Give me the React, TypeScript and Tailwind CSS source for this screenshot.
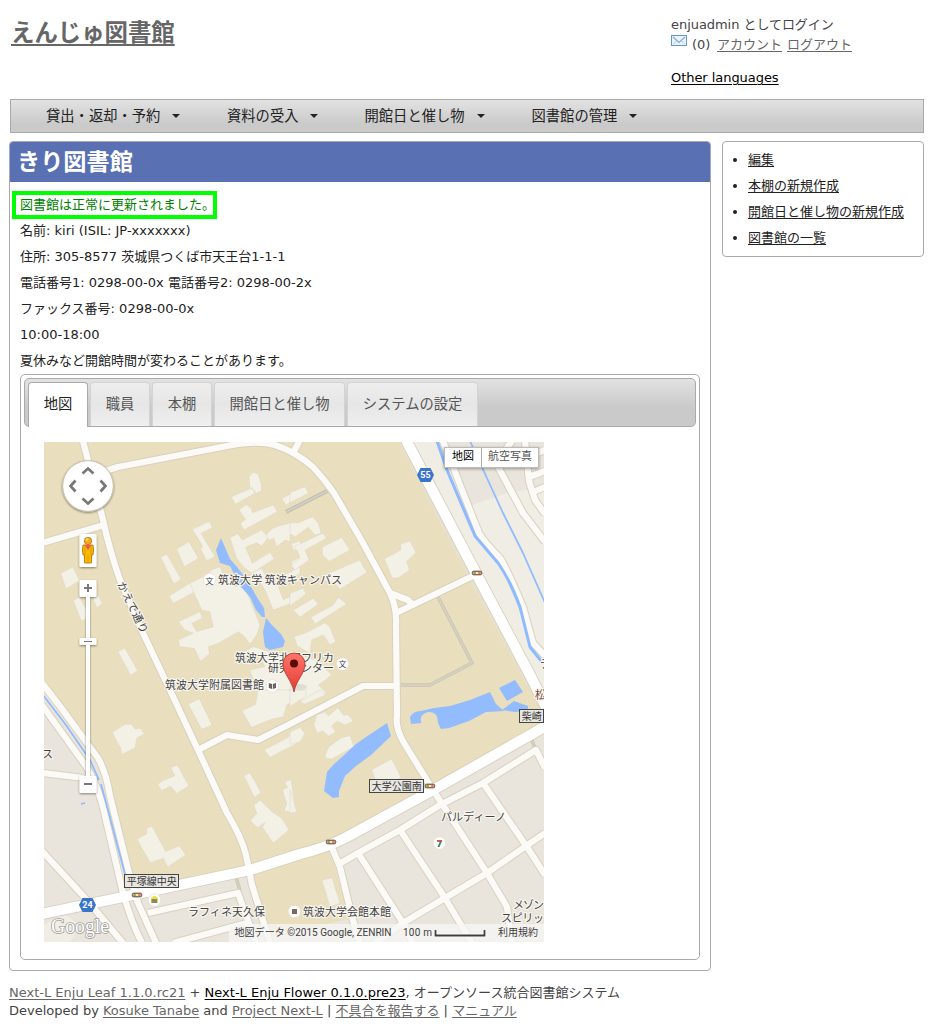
import React from "react";

const font = "font-['DejaVu_Sans','Noto_Sans_CJK_JP',sans-serif]";

const menus = [
  { label: "貸出・返却・予約", width: "w-[181px]" },
  { label: "資料の受入", width: "w-[137.5px]" },
  { label: "開館日と催し物", width: "w-[167px]" },
  { label: "図書館の管理", width: "w-[150px]" },
];

const tabs = [
  { label: "地図", width: "w-[60px]", active: true },
  { label: "職員", width: "w-[60px]" },
  { label: "本棚", width: "w-[60px]" },
  { label: "開館日と催し物", width: "w-[131px]" },
  { label: "システムの設定", width: "w-[131px]" },
];

const details = [
  "名前: kiri (ISIL: JP-xxxxxxx)",
  "住所: 305-8577 茨城県つくば市天王台1-1-1",
  "電話番号1: 0298-00-0x 電話番号2: 0298-00-2x",
  "ファックス番号: 0298-00-0x",
  "10:00-18:00",
  "夏休みなど開館時間が変わることがあります。",
];

const actions = ["編集", "本棚の新規作成", "開館日と催し物の新規作成", "図書館の一覧"];

const localRoads = [
  "M83 441L90 468L103 520Q110 552 120 580L143 633L170 690L198 750L227 813Q242 838 246 855L252 885L270 943",
  "M90 470L105 471L118 467L227 446Q257 440 275 445Q296 452 313 467Q325 480 334 493L363 543L390 593Q397 608 396 625L397 715Q395 728 404 743L433 790L487 873L507 907L512 943",
  "M293 453L300 440",
  "M42 543L104 525",
  "M390 593L408 600L412 604M477 574L396 613",
  "M398 686L363 686L290 724L258 740L227 735L198 750",
  "M42 683L62 709L98 758Q106 772 110 796L130 877L138 903L156 943",
  "M42 705L83 762Q98 782 106 820L123 893Q132 924 142 943",
  "M42 773L84 778",
  "M42 851L87 900L123 943",
  "M148 913L238 893L256 943M173 943L247 923",
  "M339 864L358 853L400 830L440 805L483 783L536 750L545 768",
  "M330 843L340 867L352 917L360 943",
  "M358 853L403 923L413 943",
  "M400 830L445 898L472 943",
  "M483 783L527 847L545 875",
  "M545 833L487 873L445 898L403 923L375 943",
  "M443 441L462 490L479 533Q484 542 500 558Q506 567 523 607L533 643L545 656",
  "M512 441L496 463L523 513L545 542",
  "M525 441L529 481L535 500L545 514M529 477L545 471M533 492L545 487M525 458L545 450",
];

const trunkRoads = [
  "M406 440L477 575L530 675L546 707",
  "M42 914L123 897L250 870L300 854Q325 848 345 838L433 790L546 726",
];

function MapArt() {
  return (
    <svg className="block h-[500px] w-[500px]" viewBox="44 442 500 500">
      <defs>
        <linearGradient id="pin" x1="0" y1="0" x2="0" y2="1">
          <stop offset="0" stopColor="#ff766a" />
          <stop offset="1" stopColor="#e33b34" />
        </linearGradient>
        <filter id="shade" x="-30%" y="-30%" width="160%" height="160%">
          <feDropShadow dx="0" dy="1" stdDeviation="1.2" floodColor="#000" floodOpacity=".45" />
        </filter>
      </defs>
      <rect x="44" y="442" width="500" height="500" fill="#e9e5dc" />
      <path d="M406 441H544V728L530 715Z" fill="#f0ede5" />
      <path d="M436 441H544V487L507 493L472 505Z" fill="#e9e5dc" />
      <path d="M44 442H407L477 575L544 706V727L433 790L330 842L250 870L130 894L108 790L98 762L44 690Z" fill="#e9debd" />
      <path d="M250 872L330 850L350 919L268 936Z" fill="#e9debd" />
      <path d="M44 925L64 914L80 925L70 942H44Z" fill="#f0ede5" />

      {/* campus buildings, north and west */}
      <g transform="translate(40 440) scale(.33333)" fill="#f3f0e5" stroke="#ddd8ca" strokeWidth="1.5">
        <path d="M627 110L640 97L655 103L663 130L665 152L648 160L637 145L574 169L635 142L645 160L586 193L574 170L630 145Z" />
        <path d="M597 210L620 193L635 207L637 218L700 195L712 215L612 270L601 250L617 238Z" />
        <path d="M725 176L780 147V172L738 195Z" />
        <path d="M457 268L508 244L517 263L483 280L525 350L500 362L482 328L488 318Z" />
        <path d="M410 327L447 305L475 355L433 380Z M362 352L380 342L423 417L402 432Z" />
        <path d="M387 468L450 430L465 455L400 490Z" />
        <path d="M62 400L98 381L119 422L78 446Z M100 482L118 470L150 530L124 543Z M157 472L175 468L187 490L171 504Z M234 635L254 624L293 692L272 706Z" />
        <path d="M450 430L480 415L500 405L515 390L540 380L550 405L575 400L585 440L610 430L660 555L650 585L630 613L615 590L595 575L535 610L505 620L508 642L482 664L463 625L420 620L415 600L460 580L435 570L415 545L480 515L487 535L455 550L470 575L520 560L510 515L485 510Z" />
        <path d="M570 293L593 281L607 300L665 270L685 292L665 318L650 308L617 322L637 370L690 337L703 357L635 400L610 380L590 355Z" />
        <path d="M697 265L720 257L765 245L780 260V275L750 282L750 305L735 300L710 320L702 295L688 300L678 286Z" />
        <path d="M640 395L665 385L690 430L780 380V400L745 420L715 440L730 480L780 455V480L700 510L675 450Z" />
        <path d="M753 312L780 302V330H760ZM753 366L780 352V380L762 385ZM763 512L780 500V530Z" />
        <path d="M603 640L640 620L735 650L780 750V780H660L630 690L675 680L660 650Z" />
      </g>
      {/* buildings east of the campus centre */}
      <g transform="translate(290 440) scale(.33333)" fill="#f3f0e5" stroke="#ddd8ca" strokeWidth="1.5">
        <path d="M0 158L45 140L55 160L0 188Z M0 250L25 248L68 230L85 250L93 280L75 285L55 262L15 290L0 280Z" />
        <path d="M12 320L98 280L110 295L45 330L57 360L15 390L3 375L30 355L23 335Z" />
        <path d="M97 322L155 292L180 330L118 364L98 345Z M283 357L332 330V312L360 303L378 337L350 365L358 390L325 414H307Z" />
        <path d="M105 405L210 360L217 375L231 397L150 448L135 430L100 420Z" />
        <path d="M0 460L40 445L48 462L0 498ZM10 510L70 475L85 492L30 532ZM62 532L130 495L145 472L170 492L75 552Z" />
        <path d="M12 590L45 580L105 548L120 562L137 605L120 615L100 585L65 600L60 640L22 618Z" />
        <path d="M0 650L20 640L85 665L125 705L85 735L108 758L60 780H0Z" />
      </g>
      {/* southern buildings */}
      <g transform="translate(40 690) scale(.33333)" fill="#f3f0e5" stroke="#ddd8ca" strokeWidth="1.5">
        <path d="M445 43L478 26L516 105L485 118Z M217 127L255 103L275 103L285 117L300 115L313 131L290 145L285 173L247 193L240 170L225 145Z" />
        <path d="M353 283L370 271L405 258L393 233L412 224L446 288L410 310L392 288L365 302Z" />
        <path d="M291 448L320 432L320 415L336 408L377 485L418 467L437 495L383 531L370 505L331 518Z" />
        <path d="M612 257L630 248L663 308L643 322Z M728 300L743 292L734 277L754 268L756 290L767 360L768 370L732 362L740 342Z" />
        <path d="M631 392L650 370L641 346L660 330L696 365L725 385L747 420L700 459L667 412L676 397L652 413Z" />
        <path d="M606 62L647 43L655 0H745L774 20L740 45L730 80L695 88L634 112Z M673 180L745 142L755 130L780 120V155L690 202Z" />
      </g>
      <g transform="translate(290 690) scale(.33333)" fill="#f3f0e5" stroke="#ddd8ca" strokeWidth="1.5">
        <path d="M0 0H48L50 15L0 50ZM30 35L90 0L107 15L45 42Z M72 105L80 75L106 66L115 78L143 53L160 75H175L190 94L165 105L143 93L125 107L137 125L117 139L98 122L82 130Z" />
        <path d="M105 195L117 170L155 143L180 137L192 170L125 207L108 205Z M0 126L30 112L45 130L30 155L0 164Z M245 239L305 207L334 265L260 280Z M96 571L126 563L150 640L120 650Z M0 300V370L20 365Z" />
      </g>

      <g fill="none" strokeLinejoin="round">
        <path d="M286 512L329 490" stroke="#bfbcb1" strokeWidth="4" />
        <path d="M286 512L329 490" stroke="#d2cec2" strokeWidth="2" />
        <path d="M438 597L472 663L430 685H400M530 736L535 748M236 877L240 891" stroke="#c8c3b1" strokeWidth="3.5" />
        <path d="M438 597L472 663L430 685H400M530 736L535 748M236 877L240 891" stroke="#d6d1bf" strokeWidth="2" />
        <path d="M403 442L470 573L533 688" stroke="#e7e0cd" strokeWidth="8" />
        {localRoads.map((d) => <path key={d} d={d} stroke="#d8d1bf" strokeWidth="8.2" />)}
        {trunkRoads.map((d) => <path key={d} d={d} stroke="#d5cebc" strokeWidth="12" />)}
        {localRoads.map((d) => <path key={d} d={d} stroke="#fbfaf7" strokeWidth="6.2" />)}
        {trunkRoads.map((d) => <path key={d} d={d} stroke="#fff" strokeWidth="10.3" />)}
        <path d="M437 441L447 470L475 536L498 563Q510 580 520 607L530 647L542 662" stroke="#8ebaff" strokeWidth="3" />
        <path d="M470 441L503 513L523 553L545 603M43 695L66 725L90 760L99 780M101 784L125 874M81 804L85 803" stroke="#8ebaff" strokeWidth="1.7" />
      </g>

      <g fill="#93bcff">
        <path d="M221 538L216 550L220 563L230 566L241 587L250 597L256 610L262 617L265 617L264 608L258 599L247 580L237 567L230 559Z" />
        <path d="M266 618L271 624L281 634L285 641L283 647L270 650L265 647L264 641L263 632Z" />
        <path d="M387 723L391 736L371 755L356 766L345 776L339 791V797L333 798L324 791L327 772L334 764L342 757L356 744L366 737Z" />
        <path d="M410 717Q413 711 421 711L434 708L450 706L470 700L490 692L496 704L504 711L486 712L469 721L449 728L441 729L438 723Q438 711 428 712Q419 714 421 723L411 724Z" />
        <path d="M499 688L515 680L523 692L507 701ZM502 710L514 701L528 706V711L515 712Z" />
      </g>

      {/* route shields and traffic lights */}
      {[{ x: 425.5, y: 475, n: "55" }, { x: 87.5, y: 905, n: "24" }].map((s) => (
        <g key={s.n} transform={`translate(${s.x} ${s.y})`}>
          <path d="M-5 -7H5L8.5 0L5 7H-5L-8.5 0Z" fill="#3b75ca" />
          <text y="3.3" textAnchor="middle" fontSize="9" fontWeight="700" fill="white" className="font-[Roboto,sans-serif]">{s.n}</text>
        </g>
      ))}
      {[[477, 573], [430, 786], [331, 842], [137, 895]].map(([x, y]) => (
        <g key={x} transform={`translate(${x} ${y})`}>
          <rect x="-4.7" y="-1.8" width="9.4" height="3.6" rx="1.3" fill="#d7ba8d" stroke="#5c4238" />
          <rect x="-3.4" y="-1" width="2" height="2" fill="#6dae66" /><rect x="-1" y="-1" width="2" height="2" fill="#ffe78a" /><rect x="1.5" y="-1" width="2" height="2" fill="#ed706e" />
        </g>
      ))}

      {/* place markers */}
      {[[209.5, 579.5], [342.5, 664], [272.5, 686], [294.5, 911.5], [439.5, 843], [154.5, 900]].map(([x, y]) => (
        <circle key={x} cx={x} cy={y} r="6.3" fill="white" stroke="#ddd8cc" strokeWidth=".6" />
      ))}
      <path d="M268.8 683L272 684V689L268.8 688ZM276 683L272.8 684V689L276 688Z" fill="#6c625c" />
      <rect x="292" y="909" width="5" height="5" fill="#85665b" />
      <path d="M151 898L154.5 895.5L158 898V903H151Z" fill="#f1df36" /><path d="M151.5 899H157V903H151.5Z" fill="#8b867a" />
      <path d="M437 840H442V842H437Z" fill="#dc584b" /><path d="M440 841H442L439.5 847H437.5Z" fill="#3e8a60" />

      <g fontSize="11" fill="#434343" stroke="#f8f6ef" strokeWidth="2.4" strokeLinejoin="round" className="font-['Noto_Sans_CJK_JP',sans-serif] [paint-order:stroke]">
        <text x="205.5" y="583.5" fontSize="8" stroke="none">文</text>
        <text x="338.5" y="667" fontSize="8" stroke="none">文</text>
        <text x="218" y="583.5" textLength="124">筑波大学 筑波キャンパス</text>
        <text x="235" y="661.5" textLength="99">筑波大学北アフリカ</text>
        <text x="268" y="672" textLength="66">研究センター</text>
        <text x="165" y="689" textLength="99">筑波大学附属図書館</text>
        <text x="188" y="916" textLength="77">ラフィネ天久保</text>
        <text x="303" y="916" textLength="88">筑波大学会館本館</text>
        <text x="441" y="820.5" textLength="65">パルディーノ</text>
        <text x="513" y="909" textLength="31">メゾン</text>
        <text x="501" y="921.5" textLength="43">スピリッ</text>
        <text x="42" y="758">ス</text>
        <text x="540" y="668">テ</text>
        <text x="535" y="699" fill="#79483c">松</text>
        <text transform="translate(117 584) rotate(64)" x="0" y="0" textLength="56">かえで通り</text>
      </g>
      {[{ x: 124.5, y: 874.5, w: 54, t: "平塚線中央" }, { x: 369.5, y: 779.5, w: 54, t: "大学公園南" }, { x: 519.5, y: 709.5, w: 24, t: "柴崎" }].map((s) => (
        <g key={s.t}>
          <rect x={s.x} y={s.y} width={s.w} height="13" fill="#e8e6e1" stroke="#444" />
          <text x={s.x + 2.3} y={s.y + 10} fontSize="10" fill="#333" className="font-['Noto_Sans_CJK_JP',sans-serif]">{s.t}</text>
        </g>
      ))}

      <ellipse cx="300" cy="687" rx="7" ry="3" fill="#000" opacity=".08" />
      <path d="M294 692C292 680 283 674 283 664A11 11 0 0 1 305 664C305 674 296 680 294 692Z" fill="url(#pin)" stroke="#a83832" strokeWidth=".8" />
      <circle cx="294" cy="663.5" r="4" fill="#590d0b" />

      {/* pan control */}
      <circle cx="88" cy="486" r="25.3" fill="white" stroke="#c8c1ae" filter="url(#shade)" />
      <path d="M82.5 473.5L88 468.5L93.5 473.5M82.5 498.5L88 503.5L93.5 498.5M75.5 480.5L70.5 486L75.5 491.5M100.5 480.5L105.5 486L100.5 491.5" fill="none" stroke="#777" strokeWidth="2.7" />
      {/* street view figure and zoom slider */}
      <g filter="url(#shade)">
        <rect x="79.5" y="534" width="17" height="33" rx="1.5" fill="white" />
        <rect x="86" y="597" width="4" height="180" fill="white" />
        <rect x="79.5" y="580" width="17" height="17" rx="1.5" fill="white" />
        <rect x="79.5" y="776" width="17" height="17" rx="1.5" fill="white" />
        <rect x="79.5" y="638" width="17" height="7" rx="1" fill="white" />
      </g>
      <path d="M83 545H93Q94 550 93 555H91.5V563H84.5V555H83Q82 550 83 545Z" fill="#fbb900" stroke="#b9770c" strokeWidth=".9" />
      <path d="M88 556V563M85 547V555M91 547V555" stroke="#d48d08" strokeWidth=".7" />
      <path d="M84.5 545H91.5L88 550Z" fill="#e75c55" />
      <circle cx="88" cy="541" r="3.7" fill="#f6a719" stroke="#b9770c" strokeWidth=".8" /><circle cx="87" cy="539.7" r="1.4" fill="#ffd572" />
      <path d="M84 588H92M88 584V592M84 784H92" stroke="#777" strokeWidth="2" /><path d="M84 641.5H92" stroke="#777" />

      <rect x="229" y="924" width="315" height="18" fill="#f5f5f5" opacity=".75" />
      <g fill="#3e3e3e" fontSize="10" className="font-[Roboto,'Noto_Sans_CJK_JP',sans-serif]">
        <text x="234.5" y="936" textLength="157" lengthAdjust="spacingAndGlyphs">地図データ ©2015 Google, ZENRIN</text>
        <text x="403" y="936" textLength="29">100 m</text>
        <text x="498" y="936" textLength="40">利用規約</text>
      </g>
      <path d="M435.5 930V935.5H484.5V930" fill="none" stroke="white" strokeWidth="3.5" />
      <path d="M435.5 930V935.5H484.5V930" fill="none" stroke="#3e3e3e" strokeWidth="1.8" />
      <text x="51" y="933" textLength="58" lengthAdjust="spacingAndGlyphs" fontSize="20" fill="white" stroke="#9c9b98" strokeWidth="1.5" className="font-['Liberation_Serif',serif] [paint-order:stroke]">Google</text>
    </svg>
  );
}

export default function App() {
  return (
    <div className={`h-[1026px] w-[946px] overflow-hidden bg-white text-[13px] text-[#222] ${font}`}>
      <header className="flex h-[99px] pl-[11px]">
        <h1 className="w-[660px] pt-[16px] text-[23.4px] leading-[35px] font-bold text-[#666]">
          <a className="underline decoration-2 underline-offset-[3px]">えんじゅ図書館</a>
        </h1>
        <div className="pt-[15px] leading-5 whitespace-nowrap text-[#444]">
          <p className="tracking-[-0.05px]">enjuadmin としてログイン</p>
          <p className="flex">
            <svg className="mt-0 mr-[5px] h-[11px] w-4" viewBox="0 0 16 11">
              <rect x=".5" y=".5" width="15" height="10" fill="#eaf3ff" stroke="#6795d1" />
              <path d="M2 9L6 5.5M14 9L10 5.5" stroke="#b4d0f2" />
              <path d="M2 2L8 7.5L14 2" fill="none" stroke="#83acd9" strokeWidth="1.2" />
            </svg>
            <span className="w-[25px]">(0)</span>
            <a className="mr-[5px] text-[#666] underline underline-offset-2">アカウント</a>
            <a className="text-[#666] underline underline-offset-2">ログアウト</a>
          </p>
          <p className="mt-[13px] tracking-[-0.05px] text-black"><a className="underline underline-offset-2">Other languages</a></p>
        </div>
      </header>

      <nav className="ml-[10px] flex h-[34px] w-[914px] items-center border border-[#aaa] bg-[linear-gradient(#e2e2e2,#cacaca_75%,#cacaca)] pl-[35px] text-[14.3px] leading-[20px]">
        {menus.map((m) => (
          <a key={m.label} className={`flex shrink-0 items-center whitespace-nowrap ${m.width}`}>
            {m.label}
            <svg className="ml-[12px] h-[4px] w-[8px]" viewBox="0 0 8 4"><path d="M0 0H8L4 4Z" fill="#222" /></svg>
          </a>
        ))}
      </nav>

      <div className="mt-2 flex items-start gap-[11px] pl-[9px]">
        <main className="h-[830px] w-[702px] rounded-[4px] border border-[#aaa]">
          <h2 className="h-10 rounded-t-[3px] bg-[#5970b2] pl-[7px] text-[23.2px] leading-[40px] font-bold text-white">きり図書館</h2>
          <div className="pt-[10px] pl-[10px]">
            <div className="leading-[26px] whitespace-nowrap">
              <p className="relative text-[#008000]">
                図書館は正常に更新されました。
                <span className="absolute -top-px -left-2 h-7 w-[205px] border-4 border-[#0f0]" />
              </p>
              {details.map((d) => <p key={d}>{d}</p>)}
            </div>
            <section className="h-[586px] w-[680px] rounded-[5px] border border-[#aaa] p-[3px]">
              <div className="flex h-[49px] items-end gap-[2px] rounded-[5px] border border-[#aaa] bg-[linear-gradient(#e2e2e2,#cacaca_60%,#cacaca)] pl-[3px] text-[14.3px]">
                {tabs.map((t) => (
                  <a key={t.label} className={`flex shrink-0 items-center justify-center rounded-t-[4px] border border-b-0 whitespace-nowrap ${t.width} ${t.active ? "-mb-px h-[45px] border-[#aaa] bg-white text-[#222]" : "h-[44px] border-[#d3d3d3] bg-[linear-gradient(#eee,#e6e6e6_50%,#efefef)] text-[#555]"}`}>
                    {t.label}
                  </a>
                ))}
              </div>
              <div className="relative mt-[15px] ml-[20px] h-[500px] w-[500px]">
                <MapArt />
                <div className="absolute top-[5px] left-[400px] flex h-[21px] w-[95px] border border-[#bbb] bg-white text-[11px] leading-[18px] shadow-[0_1px_3px_rgba(0,0,0,.35)]">
                  <span className="w-[37px] border-r border-[#aaa] text-center text-black">地図</span>
                  <span className="flex-1 text-center text-[#555]">航空写真</span>
                </div>
              </div>
            </section>
          </div>
        </main>

        <aside className="h-[116px] w-[202px] rounded-[4px] border border-[#aaa] pt-[5px] pl-[25px]">
          <ul className="list-disc leading-[26px] whitespace-nowrap">
            {actions.map((a) => (
              <li key={a}><a className="underline underline-offset-2">{a}</a></li>
            ))}
          </ul>
        </aside>
      </div>

      <footer className="mt-[13px] pl-[9px] leading-[18px] whitespace-nowrap text-[#444]">
        <p>
          <a className="text-[#666] underline underline-offset-2">Next-L Enju Leaf 1.1.0.rc21</a> + <a className="text-black underline underline-offset-2">Next-L Enju Flower 0.1.0.pre23</a>, オープンソース統合図書館システム
        </p>
        <p>
          Developed by <a className="text-[#666] underline underline-offset-2">Kosuke Tanabe</a> and <a className="text-[#666] underline underline-offset-2">Project Next-L</a> | <a className="text-[#666] underline underline-offset-2">不具合を報告する</a> | <a className="text-[#666] underline underline-offset-2">マニュアル</a>
        </p>
      </footer>
    </div>
  );
}
